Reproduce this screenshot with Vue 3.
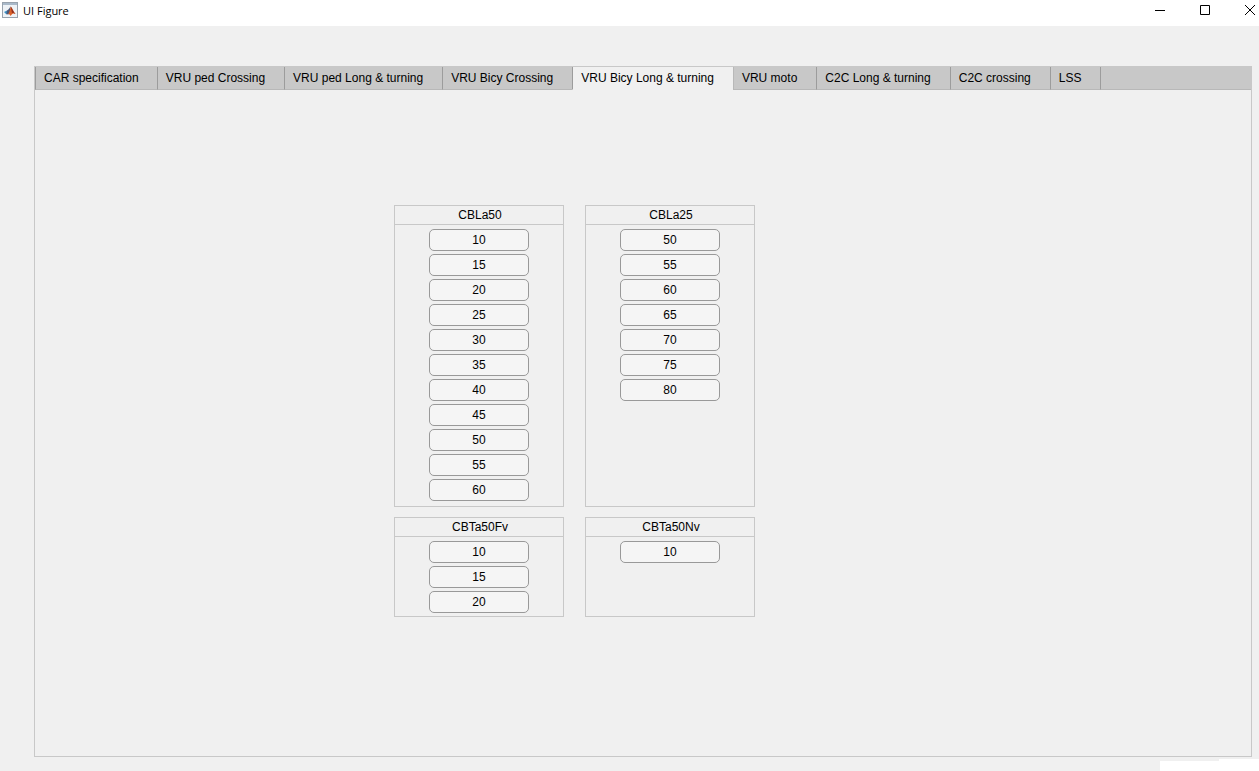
<script setup>
import { ref } from 'vue'

const tabs = [
  'CAR specification',
  'VRU ped Crossing',
  'VRU ped Long & turning',
  'VRU Bicy Crossing',
  'VRU Bicy Long & turning',
  'VRU moto',
  'C2C Long & turning',
  'C2C crossing',
  'LSS',
]
const active = ref(4)

const panels = [
  { title: 'CBLa50', values: [10, 15, 20, 25, 30, 35, 40, 45, 50, 55, 60] },
  { title: 'CBLa25', values: [50, 55, 60, 65, 70, 75, 80] },
  { title: 'CBTa50Fv', values: [10, 15, 20] },
  { title: 'CBTa50Nv', values: [10] },
]
</script>

<template>
  <div class="window">
    <header class="titlebar">
      <svg class="logo" width="16" height="16" viewBox="0 0 16 16" aria-hidden="true">
        <rect x="0.5" y="0.5" width="15" height="15" fill="#eef2f6" stroke="#98a2ad" />
        <rect x="1" y="1" width="14" height="2" fill="#a9b9c9" />
        <path d="M2 10 L5 8.500 L7 10.500 L4.500 12.500 Z" fill="#3c8fc4" />
        <path d="M5 8.500 C6.700 8 7.500 5.500 8.800 4.500 L8 10.500 L6 12.500 L4.500 12 Z" fill="#4c5878" />
        <path d="M8.800 4.500 C10.500 6 11.500 10 13.500 12 C11.500 11 10.500 11 8.500 14 C8 12.500 7 12 6 12.500 C7.500 10.500 8 7 8.800 4.500 Z" fill="#d9602a" />
        <path d="M8.800 4.500 C10 6.500 11 9.500 13.500 12 C11.500 10.500 10.800 10.500 10 11 Z" fill="#8e2a1c" />
      </svg>
      <h1 class="caption">UI Figure</h1>
      <div class="controls">
        <button type="button" aria-label="Minimize">
          <svg width="10" height="11" viewBox="0 0 10 11"><path d="M0 5.500H10" /></svg>
        </button>
        <button type="button" aria-label="Maximize">
          <svg width="10" height="10" viewBox="0 0 10 10"><path d="M0.500 0.500H9.500V9.500H0.500Z" /></svg>
        </button>
        <button type="button" aria-label="Close">
          <svg width="10" height="11" viewBox="0 0 10 11"><path d="M0 0L10 10M10 0L0 10" /></svg>
        </button>
      </div>
    </header>

    <main class="tabgroup">
      <div class="tabs" role="tablist">
        <button
          v-for="(tab, i) in tabs"
          :key="tab"
          type="button"
          role="tab"
          class="tab"
          :class="{ active: i === active, following: i === active + 1 }"
          :aria-selected="i === active"
          @click="active = i"
        >{{ tab }}</button>
        <div class="rest"></div>
      </div>
      <div class="page" role="tabpanel">
        <section v-for="panel in panels" :key="panel.title" class="panel">
          <h2>{{ panel.title }}</h2>
          <div class="values">
            <button v-for="value in panel.values" :key="value" type="button">{{ value }}</button>
          </div>
        </section>
      </div>
    </main>
    <div class="corner"></div>
  </div>
</template>

<style>
body {
  margin: 0;
}
</style>

<style scoped>
.window {
  position: relative;
  box-sizing: border-box;
  min-height: 100vh;
  display: flex;
  flex-direction: column;
  background: #f0f0f0;
  color: #000;
  font: 12px/18px "Liberation Sans", Arial, sans-serif;
}
button {
  margin: 0;
  font: inherit;
  color: inherit;
}
.titlebar {
  display: flex;
  align-items: flex-start;
  height: 26px;
  background: #fff;
}
.logo {
  margin: 2px 5px 0 2px;
}
.caption {
  margin: 2px 0 0;
  font: 11px/18px "Open Sans", "Noto Sans", sans-serif;
}
.controls {
  margin-left: auto;
  display: flex;
  gap: 27px;
}
.controls button {
  display: flex;
  align-items: center;
  justify-content: center;
  width: 18px;
  height: 20px;
  padding: 0;
  border: 0;
  background: none;
}
.controls path {
  fill: none;
  stroke: #000;
}
.tabgroup {
  flex: 1;
  display: flex;
  flex-direction: column;
  margin: 40px 7px 14px 34px;
  border: 1px solid #c8c8c8;
}
.tabs {
  display: flex;
}
.tab {
  padding: 2px 18px 2px 8px;
  border: 0;
  border-left: 1px solid #9c9c9c;
  border-bottom: 1px solid #b8b8b8;
  background: #c8c8c8;
  white-space: nowrap;
}
.tab + .tab {
  padding-right: 19px;
}
.tab.active {
  background: #f0f0f0;
  border-bottom-color: #f0f0f0;
}
.tab.following {
  border-left-color: #b8b8b8;
}
.rest {
  flex: 1;
  border-left: 1px solid #9c9c9c;
  border-bottom: 1px solid #b8b8b8;
  background: #c8c8c8;
}
.page {
  display: grid;
  grid-template-columns: 170px 170px;
  grid-template-rows: auto auto;
  align-content: start;
  gap: 10px 21px;
  padding: 115px 0 0 359px;
}
.panel {
  border: 1px solid #c8c8c8;
}
.panel h2 {
  margin: 0;
  padding-left: 2px;
  border-bottom: 1px solid #c8c8c8;
  font: inherit;
  text-align: center;
}
.values {
  display: flex;
  flex-direction: column;
  align-items: center;
  gap: 3px;
  padding: 4px 0 3px;
}
.panel:nth-child(-n + 2) .values {
  padding-bottom: 5px;
}
.values button {
  width: 100px;
  height: 22px;
  padding: 0;
  border: 1px solid #999;
  border-radius: 5px;
  background: #f5f5f5;
}
.corner {
  position: absolute;
  right: 0;
  bottom: 0;
  width: 99px;
  height: 12px;
  background: #fff;
  clip-path: polygon(0 2px, 59px 2px, 59px 0, 100% 0, 100% 100%, 0 100%);
}
</style>
